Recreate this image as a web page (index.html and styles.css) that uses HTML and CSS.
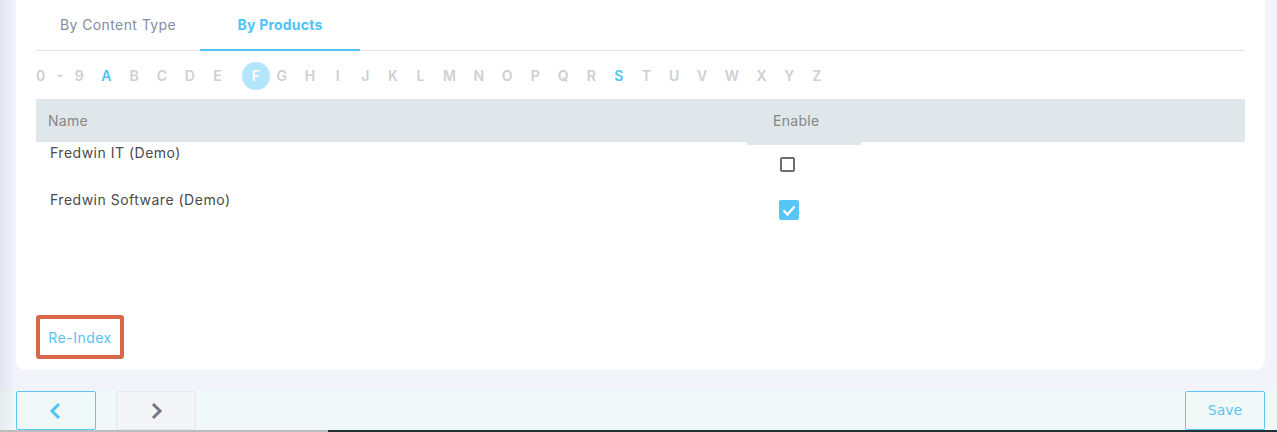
FILE: index.html
```html
<!DOCTYPE html>
<html>
<head>
<meta charset="utf-8">
<link rel="stylesheet" href="styles.css">
</head>
<body>
<div class="page">
  <div class="card">
    <div class="tabs">
      <div class="tab">By Content Type</div>
      <div class="tab active">By Products</div>
    </div>
    <div class="alpha">
      <span class="num">0 - 9</span>
      <span class="hl">A</span><span>B</span><span>C</span><span>D</span><span>E</span>
      <span class="sel">F</span>
      <span>G</span><span>H</span><span>I</span><span>J</span><span>K</span><span>L</span><span>M</span><span>N</span><span>O</span><span>P</span><span>Q</span><span>R</span>
      <span class="hl">S</span>
      <span>T</span><span>U</span><span>V</span><span>W</span><span>X</span><span>Y</span><span>Z</span>
    </div>
    <div class="table">
      <div class="thead">
        <div class="th name">Name</div>
        <div class="th enable">Enable</div>
        <div class="th rest"></div>
      </div>
      <div class="row">
        <div class="td name">Fredwin IT (Demo)</div>
        <div class="td enable"><span class="cb"></span></div>
      </div>
      <div class="row">
        <div class="td name">Fredwin Software (Demo)</div>
        <div class="td enable"><span class="cb checked"><svg viewBox="0 0 20 20" width="20" height="20"><path d="M4.5 10.5 L8.5 14.5 L15.5 6.5" fill="none" stroke="#fff" stroke-width="2.4"/></svg></span></div>
      </div>
    </div>
    <div class="actions">
      <button class="reindex">Re-Index</button>
    </div>
  </div>
  <div class="footer">
    <button class="nav prev"><svg viewBox="0 0 16 20" width="16" height="20"><path d="M11 3 L4 10 L11 17" fill="none" stroke="#4fc3f7" stroke-width="3"/></svg></button>
    <button class="nav next"><svg viewBox="0 0 16 20" width="16" height="20"><path d="M5 3 L12 10 L5 17" fill="none" stroke="#777588" stroke-width="3"/></svg></button>
    <div class="spacer"></div>
    <button class="save">Save</button>
  </div>
</div>
</body>
</html>
```
FILE: styles.css
```css
html, body {
  margin: 0;
  padding: 0;
}
body {
  width: 1277px;
  height: 432px;
  overflow: hidden;
  background: linear-gradient(to right, #e3e3ee 0, #f3f3fc 16px, #f3f3fc 100%);
  font-family: "Inter", "Liberation Sans", sans-serif;
}
.page {
  display: flex;
  flex-direction: column;
  height: 432px;
}
.card {
  height: 370px;
  margin: 0 12px 0 16px;
  background: #fff;
  border-radius: 0 0 9px 9px;
  padding: 0 20px;
  display: flex;
  flex-direction: column;
}
.tabs {
  display: flex;
  height: 51px;
  border-bottom: 1px solid #e2e2e2;
  box-sizing: border-box;
}
.tab {
  width: 164px;
  display: flex;
  align-items: center;
  justify-content: center;
  font-size: 14px;
  letter-spacing: 0.4px;
  color: #848c9e;
  padding-bottom: 1px;
  box-sizing: border-box;
}
.tab.active {
  width: 160px;
  color: #4fc3f7;
  font-weight: 700;
  letter-spacing: 0.2px;
  border-bottom: 2px solid #4fc3f7;
  margin-bottom: -1px;
  padding-bottom: 0;
}
.alpha {
  height: 48px;
  display: flex;
  align-items: center;
  gap: 17.6px;
  font-size: 14px;
  font-weight: 600;
  color: #cfcfcf;
  padding-top: 1px;
  box-sizing: border-box;
}
.alpha span {
  min-width: 10px;
  text-align: center;
}
.alpha .num {
  word-spacing: 8px;
}
.alpha .hl {
  color: #4fc3f7;
}
.alpha .sel {
  width: 28px;
  height: 28px;
  border-radius: 50%;
  background: #b3e5fc;
  color: #fff;
  display: flex;
  align-items: center;
  justify-content: center;
  margin: 0 -11px 0 2px;
}
.table {
  display: flex;
  flex-direction: column;
  height: 140px;
}
.thead {
  display: flex;
  height: 43px;
  background: #e0e7ea;
}
.th {
  font-size: 14px;
  letter-spacing: 0.3px;
  color: #868686;
  display: flex;
  align-items: center;
  box-sizing: border-box;
}
.name {
  width: 711px;
  padding-left: 12px;
  box-sizing: border-box;
}
.th.enable {
  width: 114px;
  padding-left: 26px;
  padding-bottom: 3px;
  height: 46px;
  background: #e0e7ea;
  align-self: flex-start;
}
.rest {
  flex: 1;
}
.row {
  display: flex;
  height: 47px;
}
.td {
  font-size: 14px;
  letter-spacing: 0.5px;
  color: #4a4a4a;
  box-sizing: border-box;
}
.td.name {
  padding-left: 14px;
  padding-top: 2px;
}
.td.enable {
  padding-left: 33px;
  padding-top: 15px;
}
.row + .row .td.enable {
  padding-left: 32px;
  padding-top: 11px;
}
.row + .row .td.name {
  padding-top: 2px;
}
.cb {
  display: block;
  width: 15px;
  height: 15px;
  border: 2px solid #6e6e6e;
  border-radius: 2px;
  box-sizing: border-box;
}
.cb.checked {
  width: 20px;
  height: 20px;
  border: none;
  background: #55c6f8;
}
.cb svg {
  display: block;
}
.actions {
  flex: 1;
  display: flex;
  align-items: flex-end;
  padding-bottom: 11px;
}
.reindex {
  width: 88px;
  height: 44px;
  border: 4px solid #d9674a;
  border-radius: 3px;
  background: #fff;
  color: #55c4f5;
  font-family: "Inter", "Liberation Sans", sans-serif;
  font-size: 14px;
  letter-spacing: 0.5px;
  padding: 0;
  text-align: center;
}
.footer {
  margin-top: 21px;
  height: 41px;
  display: flex;
  gap: 20px;
  padding: 0 12px 0 16px;
  box-sizing: border-box;
  background-color: #f1f8f8;
  background-image: linear-gradient(to right, #bdbdbd 0, #bdbdbd 328px, #1f3337 328px, #1f3337 100%),
    linear-gradient(to right, #e6ebee 0, #f1f8f8 16px);
  background-size: 100% 2px, 16px 100%;
  background-position: left bottom, left top;
  background-repeat: no-repeat;
}
button {
  cursor: pointer;
}
.nav, .save {
  width: 80px;
  height: 39px;
  box-sizing: border-box;
  border-radius: 2px;
  display: flex;
  align-items: center;
  justify-content: center;
  padding: 0;
}
.prev {
  border: 1px solid #5cc6f6;
  background: #f1f8f8;
}
.next {
  border: 1px solid #e6e8ea;
  background: #f2f4f6;
}
.spacer {
  flex: 1;
}
.save {
  border: 1px solid #5cc6f6;
  background: #f1f8f8;
  color: #5cc4f5;
  font-family: "DejaVu Sans", Verdana, sans-serif;
  font-size: 14px;
  padding-bottom: 2px;
}
.nav svg {
  display: block;
}
```
